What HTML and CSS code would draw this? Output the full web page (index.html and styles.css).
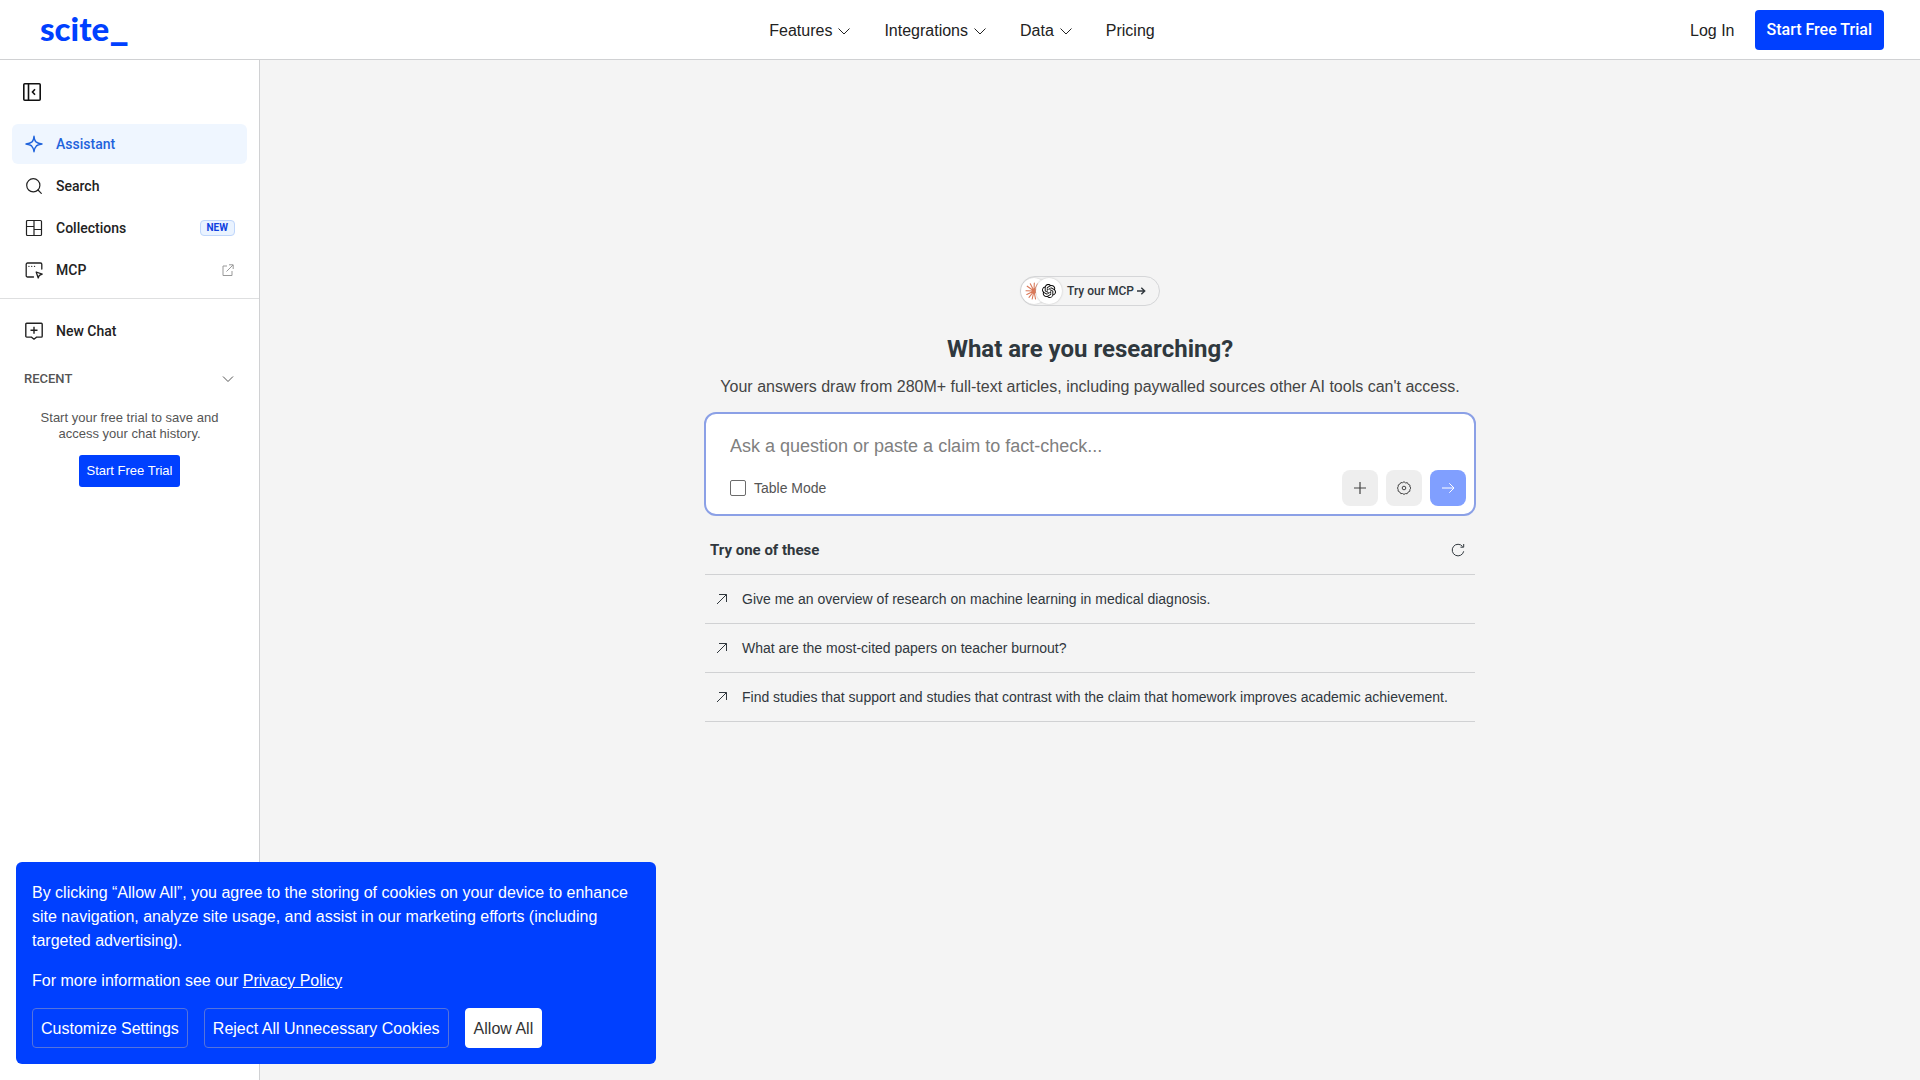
FILE: index.html
```html
<!DOCTYPE html>
<html lang="en">
<head>
<meta charset="utf-8">
<meta name="viewport" content="width=device-width, initial-scale=1">
<title>scite_ Assistant</title>
<link rel="stylesheet" href="styles.css">
</head>
<body>
<header class="header">
  <a class="logo" href="#">scite<span class="logo-bar">_</span></a>
  <nav class="nav" aria-label="Main">
    <button class="nav-item" type="button">Features <svg class="chevron" viewBox="0 0 14 14"><path d="M1.500 4.500l5.500 5.500 5.500-5.500"/></svg></button>
    <button class="nav-item" type="button">Integrations <svg class="chevron" viewBox="0 0 14 14"><path d="M1.500 4.500l5.500 5.500 5.500-5.500"/></svg></button>
    <button class="nav-item" type="button">Data <svg class="chevron" viewBox="0 0 14 14"><path d="M1.500 4.500l5.500 5.500 5.500-5.500"/></svg></button>
    <a class="nav-item" href="#">Pricing</a>
  </nav>
  <div class="account">
    <a class="login" href="#">Log In</a>
    <a class="trial" href="#">Start Free Trial</a>
  </div>
</header>

<div class="page">
  <aside class="sidebar">
    <button class="collapse" type="button" aria-label="Collapse sidebar">
      <svg class="icon" viewBox="0 0 20 20"><g fill="none" stroke="#111" stroke-width="1.600"><rect x="1.800" y="1.800" width="16.400" height="16.400" rx="1"/><path d="M6.500 2v16M13 7.300L10.500 10l2.500 2.700"/></g></svg>
    </button>
    <nav class="menu" aria-label="Workspace">
      <a class="menu-item active" href="#">
        <svg class="icon" viewBox="0 0 20 20"><path d="M10 2.200c.4 4 2 5.800 2.400 5.900 1.200 1 3 1.500 5.600 1.900-2.600.4-4.400.9-5.600 1.900-.4.400-2 2-2.400 5.900-.4-3.900-2-5.500-2.400-5.900-1.200-1-3-1.500-5.600-1.900 2.600-.4 4.400-.9 5.600-1.900.4-.1 2-1.900 2.400-5.900z" fill="none" stroke="currentColor" stroke-width="1.400" stroke-linejoin="round"/></svg>
        <span class="menu-label">Assistant</span>
      </a>
      <a class="menu-item" href="#">
        <svg class="icon" viewBox="0 0 20 20"><g fill="none" stroke="currentColor" stroke-width="1.200" stroke-linecap="round"><circle cx="9.300" cy="9.300" r="6.600"/><path d="M14 14l3.300 3.300"/></g></svg>
        <span class="menu-label">Search</span>
      </a>
      <a class="menu-item" href="#">
        <svg class="icon" viewBox="0 0 20 20"><g fill="none" stroke="currentColor" stroke-width="1.200"><rect x="2.500" y="2.500" width="15" height="15" rx="1"/><path d="M10 2.500v15M2.500 8.500H10M10 11.500h7.500"/></g></svg>
        <span class="menu-label">Collections</span>
        <span class="badge">NEW</span>
      </a>
      <a class="menu-item" href="#">
        <svg class="icon" viewBox="0 0 20 20"><g fill="none" stroke="currentColor" stroke-width="1.300" stroke-linejoin="round" stroke-linecap="round"><path d="M9.500 17H3.500a1.300 1.300 0 0 1-1.300-1.300V4.300A1.300 1.300 0 0 1 3.500 3h13a1.300 1.300 0 0 1 1.300 1.300V9"/><path d="M4.900 6.300h.1M7.700 6.300h.1M10.500 6.300h.1"/><path d="M12.200 12l6 2.100-2.800 1.200-1.200 2.700z"/></g></svg>
        <span class="menu-label">MCP</span>
        <svg class="external" viewBox="0 0 14 14"><path d="M6 3H2v9.500h9V8M5.500 8.500l6.500-6.500M8 1.800h4.200V6" fill="none" stroke="currentColor"/></svg>
      </a>
    </nav>
    <div class="chats">
      <button class="menu-item new-chat" type="button">
        <svg class="icon" viewBox="0 0 20 20"><path d="M2.700 2.300h14.600a.9.900 0 0 1 .9.900v12a.9.900 0 0 1-.9.900h-4.800L10 18.200l-2.500-2.100H2.700a.9.900 0 0 1-.9-.9v-12a.9.900 0 0 1 .9-.9zM10 5.800v7M6.500 9.300h7" fill="none" stroke="currentColor" stroke-width="1.400"/></svg>
        <span class="menu-label">New Chat</span>
      </button>
      <button class="recent" type="button">RECENT <svg class="chevron" viewBox="0 0 14 14"><path d="M2 4.500l5 5 5-5"/></svg></button>
      <p class="recent-note">Start your free trial to save and access your chat history.</p>
      <a class="trial-small" href="#">Start Free Trial</a>
    </div>
  </aside>

  <main class="main">
    <div class="column">
      <a class="pill" href="#">
        <span class="bubbles">
          <span class="bubble"><svg class="claude" viewBox="0 0 18 18"><path d="M9 9L9.300 1M9 9l3.500-7M9 9L5.300 1.800M9 9L2.200 4.200M9 9L1 8.800M9 9l-7.200 3.500M9 9l-5 6.300M9 9l-1.800 8M9 9l1.500 8M9 9l5.500 6M9 9l7.500 2.500M9 9l8-1M9 9l6.500-4.500" fill="none" stroke="#d97757" stroke-width="1.100" stroke-linecap="round"/></svg></span>
          <span class="bubble"><svg class="openai" viewBox="0 0 24 24"><path d="M22.2819 9.8211a5.9847 5.9847 0 0 0-.5157-4.9108 6.0462 6.0462 0 0 0-6.5098-2.9A6.0651 6.0651 0 0 0 4.9807 4.1818a5.9847 5.9847 0 0 0-3.9977 2.9 6.0462 6.0462 0 0 0 .7427 7.0966 5.98 5.98 0 0 0 .511 4.9107 6.051 6.051 0 0 0 6.5146 2.9001A5.9847 5.9847 0 0 0 13.2599 24a6.0557 6.0557 0 0 0 5.7718-4.2058 5.9894 5.9894 0 0 0 3.9977-2.9001 6.0557 6.0557 0 0 0-.7475-7.0729zm-9.022 12.6081a4.4755 4.4755 0 0 1-2.8764-1.0408l.1419-.0804 4.7783-2.7582a.7948.7948 0 0 0 .3927-.6813v-6.7369l2.02 1.1686a.071.071 0 0 1 .038.052v5.5826a4.504 4.504 0 0 1-4.4945 4.4944zm-9.6607-4.1254a4.4708 4.4708 0 0 1-.5346-3.0137l.142.0852 4.783 2.7582a.7712.7712 0 0 0 .7806 0l5.8428-3.3685v2.3324a.0804.0804 0 0 1-.0332.0615L9.74 19.9502a4.4992 4.4992 0 0 1-6.1408-1.6464zM2.3408 7.8956a4.485 4.485 0 0 1 2.3655-1.9728V11.6a.7664.7664 0 0 0 .3879.6765l5.8144 3.3543-2.0201 1.1685a.0757.0757 0 0 1-.071 0l-4.8303-2.7865A4.504 4.504 0 0 1 2.3408 7.872zm16.5963 3.8558L13.1038 8.364 15.1192 7.2a.0757.0757 0 0 1 .071 0l4.8303 2.7913a4.4944 4.4944 0 0 1-.6765 8.1042v-5.6772a.79.79 0 0 0-.407-.667zm2.0107-3.0231l-.142-.0852-4.7735-2.7818a.7759.7759 0 0 0-.7854 0L9.409 9.2297V6.8974a.0662.0662 0 0 1 .0284-.0615l4.8303-2.7866a4.4992 4.4992 0 0 1 6.6802 4.66zM8.3065 12.863l-2.02-1.1638a.0804.0804 0 0 1-.038-.0567V6.0742a4.4992 4.4992 0 0 1 7.3757-3.4537l-.142.0805L8.704 5.459a.7948.7948 0 0 0-.3927.6813zm1.0976-2.3654l2.602-1.4998 2.6069 1.4998v2.9994l-2.5974 1.4997-2.6067-1.4997Z"/></svg></span>
        </span>
        <span>Try our MCP</span>
        <svg class="pill-arrow" viewBox="0 0 10 10"><path d="M1 5h7.500M5.300 1.800L8.700 5 5.300 8.200" fill="none" stroke="currentColor" stroke-width="1.400"/></svg>
      </a>
      <h1 class="title">What are you researching?</h1>
      <p class="subtitle">Your answers draw from 280M+ full-text articles, including paywalled sources other AI tools can't access.</p>

      <form class="ask">
        <input class="question" type="text" aria-label="Question" placeholder="Ask a question or paste a claim to fact-check...">
        <div class="ask-bar">
          <label class="table-mode"><input class="check" type="checkbox"> Table Mode</label>
          <div class="tools">
            <button class="tool" type="button" aria-label="Add"><svg class="tool-icon" viewBox="0 0 14 14"><path d="M7 1v12M1 7h12" fill="none" stroke="currentColor" stroke-width="1.200"/></svg></button>
            <button class="tool" type="button" aria-label="Settings"><svg class="tool-icon" viewBox="0 0 14 14"><g fill="none" stroke="currentColor"><path d="M7 .7l1.500 1.200 1.900-.2.900 1.700 1.700.8-.1 1.900L14 7l-1.100 1.500-.1 1.800-1.700.8-.9 1.600-1.800-.1L7 13.400l-1.500-.9-1.800.1-.9-1.600-1.600-.8-.1-1.800L.5 7l.7-1.400.1-1.700 1.600-.8.900-1.500 1.800.1z" stroke-linejoin="round"/><circle cx="7" cy="7" r="1.800"/></g></svg></button>
            <button class="tool send" type="submit" aria-label="Send"><svg class="tool-icon" viewBox="0 0 14 14"><path d="M1 7h12M8.300 2.300L13 7l-4.700 4.700" fill="none" stroke="currentColor"/></svg></button>
          </div>
        </div>
      </form>

      <section class="ideas">
        <div class="ideas-head">
          <h2 class="ideas-title">Try one of these</h2>
          <button class="refresh" type="button" aria-label="Refresh suggestions"><svg class="tool-icon" viewBox="0 0 14 14"><path d="M12.700 8.300A5.800 5.800 0 1 1 11.600 3.500M12.700 1v3.200H9.500" fill="none" stroke="currentColor"/></svg></button>
        </div>
        <ul class="idea-list">
          <li><button class="idea" type="button"><svg class="idea-icon" viewBox="0 0 12 12"><path d="M1 11L10.500 1.500M3 1.500h7.500V9" fill="none" stroke="currentColor"/></svg> Give me an overview of research on machine learning in medical diagnosis.</button></li>
          <li><button class="idea" type="button"><svg class="idea-icon" viewBox="0 0 12 12"><path d="M1 11L10.500 1.500M3 1.500h7.500V9" fill="none" stroke="currentColor"/></svg> What are the most-cited papers on teacher burnout?</button></li>
          <li><button class="idea" type="button"><svg class="idea-icon" viewBox="0 0 12 12"><path d="M1 11L10.500 1.500M3 1.500h7.500V9" fill="none" stroke="currentColor"/></svg> Find studies that support and studies that contrast with the claim that homework improves academic achievement.</button></li>
        </ul>
      </section>
    </div>
  </main>
</div>

<section class="cookies" aria-label="Cookie consent">
  <p class="cookie-text">By clicking “Allow All”, you agree to the storing of cookies on your device to enhance site navigation, analyze site usage, and assist in our marketing efforts (including targeted advertising).</p>
  <p class="cookie-text">For more information see our <a class="policy" href="#">Privacy Policy</a></p>
  <div class="cookie-actions">
    <button class="cookie-button" type="button">Customize Settings</button>
    <button class="cookie-button" type="button">Reject All Unnecessary Cookies</button>
    <button class="cookie-button allow" type="button">Allow All</button>
  </div>
</section>
</body>
</html>
```
FILE: styles.css
```css
* { box-sizing: border-box; }

body {
  margin: 0;
  min-height: 100vh;
  display: flex;
  flex-direction: column;
  background: #f4f4f4;
  color: #222;
  font: 16px/24px "Liberation Sans", Arial, sans-serif;
}

a { color: inherit; text-decoration: none; }
button { margin: 0; padding: 0; border: 0; background: none; color: inherit; font: inherit; cursor: pointer; }
h1, h2, p, ul { margin: 0; padding: 0; }
ul { list-style: none; }
svg { flex: none; }

/* Header */
.header {
  display: grid;
  grid-template-columns: 1fr auto 1fr;
  align-items: center;
  height: 60px;
  padding: 0 36px 0 40px;
  background: #fff;
  border-bottom: 1px solid #d0d1d3;
}
.logo {
  display: flex;
  justify-self: start;
  height: 40px;
  margin-bottom: 3px;
  color: #0040ff;
  font: 900 33px/40px Lato, sans-serif;
}
.logo-bar { font-size: 42px; line-height: 32px; }
.nav { display: flex; gap: 33px; }
.nav-item { display: flex; align-items: center; gap: 5px; padding-top: 2px; }
.chevron { width: 14px; height: 14px; fill: none; stroke: currentColor; }
.account { display: flex; justify-content: flex-end; align-items: center; gap: 20px; }
.login { padding-top: 2px; }
.trial {
  padding: 8px 12px;
  border-radius: 4px;
  background: #0040ff;
  color: #fff;
  font-family: Roboto, sans-serif;
  font-weight: 500;
}

/* Sidebar */
.page { display: flex; flex: 1; }
.sidebar { flex: none; width: 260px; background: #fff; border-right: 1px solid #d0d1d3; }
.icon { width: 20px; height: 20px; }
.collapse { display: flex; margin: 22px 22px; }
.menu {
  display: flex;
  flex-direction: column;
  gap: 2px;
  padding: 0 12px 8px;
  border-bottom: 1px solid #dedfe0;
}
.menu-item {
  display: flex;
  align-items: center;
  gap: 12px;
  height: 40px;
  padding: 0 12px;
  border-radius: 6px;
  font: 500 14px/20px Roboto, sans-serif;
}
.menu-label { margin-right: auto; }
.active { background: #eff6ff; color: #1f63dc; }
.badge {
  padding: 0 6px;
  border: 1px solid #bfd6fb;
  border-radius: 4px;
  background: #eaf3ff;
  color: #0f40e0;
  font: bold 10px/14px Roboto, sans-serif;
}
.external { width: 14px; height: 14px; color: #999; }
.chats { display: flex; flex-direction: column; padding: 12px 12px; }
.recent {
  display: flex;
  justify-content: space-between;
  align-items: center;
  margin-top: 18px;
  padding: 0 12px;
  color: #555;
  font: 500 13px/20px Roboto, sans-serif;
}
.recent-note { margin: 21px 24px 13px; color: #555; font-size: 13px; line-height: 16px; text-align: center; }
.trial-small {
  align-self: center;
  padding: 8px;
  border-radius: 3px;
  background: #0040ff;
  color: #fff;
  font-size: 13px;
  line-height: 16px;
}

/* Assistant */
.main { flex: 1; padding: 20vh 24px 24px; }
.column { display: flex; flex-direction: column; max-width: 772px; margin: 0 auto; }
.pill {
  display: flex;
  align-items: center;
  align-self: center;
  gap: 2px;
  height: 30px;
  padding: 0 13px 0 0;
  border: 1px solid #d5d6d8;
  border-radius: 15px;
  color: #30373d;
  font: 500 12px/16px Roboto, sans-serif;
}
.bubbles { display: flex; margin-right: 3px; }
.bubble {
  display: flex;
  justify-content: center;
  align-items: center;
  width: 26px;
  height: 26px;
  border-radius: 50%;
  background: #fff;
  box-shadow: 0 0 2px #bbb;
}
.bubble + .bubble { margin-left: -11px; }
.claude { width: 18px; height: 18px; }
.openai { width: 14px; height: 14px; }
.pill-arrow { width: 10px; height: 10px; }
.title { margin-top: 27px; color: #2f383e; font: bold 24px/32px Roboto, sans-serif; text-align: center; }
.subtitle { margin-top: 10px; color: #444; text-align: center; }
.ask {
  margin-top: 13px;
  padding: 16px 8px 8px 24px;
  border: 2px solid #8ba0e6;
  border-radius: 12px;
  background: #fff;
}
.question {
  display: block;
  width: 100%;
  height: 32px;
  padding: 0;
  border: 0;
  outline: 0;
  background: none;
  color: #222;
  font: 18px/24px "Liberation Sans", Arial, sans-serif;
}
.question::placeholder { color: #808080; }
.ask-bar { display: flex; justify-content: space-between; align-items: center; margin-top: 8px; }
.table-mode { display: flex; align-items: center; gap: 8px; color: #555; font-size: 14px; line-height: 20px; }
.check {
  appearance: none;
  width: 16px;
  height: 16px;
  margin: 0;
  border: 1px solid #6b6b6b;
  border-radius: 2px;
  background: #fff;
}
.tools { display: flex; gap: 8px; }
.tool {
  display: flex;
  justify-content: center;
  align-items: center;
  width: 36px;
  height: 36px;
  border-radius: 8px;
  background: #eee;
  color: #444;
}
.send { background: #809fff; color: #fff; }
.tool-icon { width: 14px; height: 14px; }

/* Suggestions */
.ideas { padding: 0 1px; color: #30373d; }
.ideas-head {
  display: flex;
  justify-content: space-between;
  align-items: center;
  padding: 22px 10px 12px 5px;
  border-bottom: 1px solid #d0d1d3;
}
.ideas-title { font: bold 15px/24px Roboto, sans-serif; }
.refresh { display: flex; }
.idea {
  display: flex;
  align-items: center;
  gap: 14px;
  width: 100%;
  padding: 14px 11px;
  border-bottom: 1px solid #d0d1d3;
  font-size: 14px;
  line-height: 20px;
  text-align: left;
}
.idea-icon { width: 12px; height: 12px; }

/* Cookie notice, over the page */
.cookies {
  position: fixed;
  left: 16px;
  bottom: 16px;
  width: 640px;
  max-width: calc(100% - 32px);
  padding: 19px 16px 16px;
  border-radius: 6px;
  background: #0040ff;
  color: #fff;
}
.cookie-text { margin-bottom: 16px; }
.cookie-text + .cookie-text { margin-bottom: 15px; }
.policy { text-decoration: underline; }
.cookie-actions { display: flex; flex-wrap: wrap; gap: 16px; }
.cookie-button { padding: 8px 8px 6px; border: 1px solid #5573dc; border-radius: 4px; }
.allow { border-color: #fff; background: #fff; color: #333; }
```
